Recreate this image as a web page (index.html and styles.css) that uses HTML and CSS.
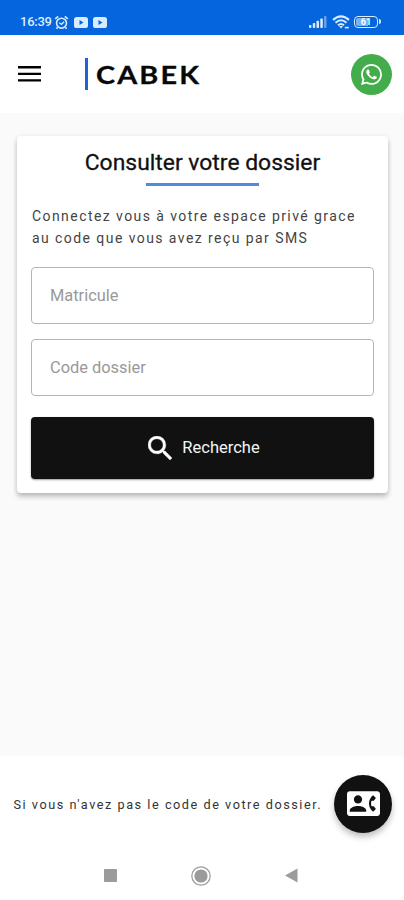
FILE: index.html
```html
<!DOCTYPE html>
<html lang="fr">
<head>
<meta charset="utf-8">
<meta name="viewport" content="width=device-width, initial-scale=1">
<title>CABEK</title>
<link rel="stylesheet" href="styles.css">
</head>
<body>
<div class="status">
  <span class="time">16:39</span>
  <svg class="alarm" viewBox="0 0 16 16" fill="none" stroke="currentColor"><circle cx="8" cy="8.7" r="5.3" stroke-width="1.7"/><path d="M1.3 4.2 4.5 1.5M14.7 4.2 11.5 1.5M3.7 13.2 2.6 14.6M12.3 13.2l1.1 1.4" stroke-width="1.8"/><path d="M5.6 8.2 8 10l2.7-2.8" stroke-width="1.5"/></svg>
  <svg class="video" viewBox="0 0 14 11"><rect width="14" height="11" rx="2.6" fill="currentColor"/><path d="M5.5 3v5l4-2.5z" fill="#0565dc"/></svg>
  <svg class="video" viewBox="0 0 14 11"><rect width="14" height="11" rx="2.6" fill="currentColor"/><path d="M5.5 3v5l4-2.5z" fill="#0565dc"/></svg>
  <span class="spacer"></span>
  <svg class="signal" viewBox="0 0 18 12" fill="currentColor"><rect y="9" width="2.4" height="3" rx=".8"/><rect x="3.8" y="7" width="2.4" height="5" rx=".8"/><rect x="7.5" y="4.8" width="2.5" height="7.2" rx=".8"/><rect x="11.3" y="2.4" width="2.5" height="9.6" rx=".8"/><rect x="15" width="2.5" height="12" rx=".8" opacity=".45"/></svg>
  <svg class="wifi" viewBox="0 0 18 14" fill="none" stroke="currentColor" stroke-width="2.1"><path d="M1 4.9Q9-2.2 17 4.9M3.5 7.7Q9 2.8 14.5 7.7M6 10.3Q9 7.7 12 10.3"/><path d="m7 11 2 2.4L11 11z" fill="currentColor" stroke="none"/><path d="M12.8 12.6h4" stroke-width="1.6"/></svg>
  <span class="battery"><span class="level">61</span></span>
</div>

<header class="header">
  <svg class="menu" viewBox="0 0 23 16"><path d="M0 0h23v2.4H0zM0 6.7h23v2.4H0zM0 13.2h23v2.4H0z"/></svg>
  <div class="brand"><span>CABEK</span></div>
  <a class="whatsapp" aria-label="WhatsApp">
    <svg viewBox="0 0 24 24" fill="#fff"><path d="M17.472 14.382c-.297-.149-1.758-.867-2.03-.967-.273-.099-.471-.148-.67.15-.197.297-.767.966-.94 1.164-.173.199-.347.223-.644.075-.297-.15-1.255-.463-2.39-1.475-.883-.788-1.48-1.761-1.653-2.059-.173-.297-.018-.458.13-.606.134-.133.298-.347.446-.52.149-.174.198-.298.298-.497.099-.198.05-.371-.025-.52-.075-.149-.669-1.612-.916-2.207-.242-.579-.487-.5-.669-.51-.173-.008-.371-.01-.57-.01-.198 0-.52.074-.792.372-.272.297-1.04 1.016-1.04 2.479 0 1.462 1.065 2.875 1.213 3.074.149.198 2.096 3.2 5.077 4.487.709.306 1.262.489 1.694.625.712.227 1.36.195 1.871.118.571-.085 1.758-.719 2.006-1.413.248-.694.248-1.289.173-1.413-.074-.124-.272-.198-.57-.347m-5.421 7.403h-.004a9.87 9.87 0 0 1-5.031-1.378l-.361-.214-3.741.982.998-3.648-.235-.374a9.86 9.86 0 0 1-1.51-5.26c.001-5.45 4.436-9.884 9.888-9.884a9.82 9.82 0 0 1 6.988 2.898 9.825 9.825 0 0 1 2.893 6.994c-.003 5.45-4.437 9.884-9.885 9.884m8.413-18.297A11.815 11.815 0 0 0 12.05 0C5.495 0 .16 5.335.157 11.892c0 2.096.547 4.142 1.588 5.945L.057 24l6.305-1.654a11.882 11.882 0 0 0 5.683 1.448h.005c6.554 0 11.89-5.335 11.893-11.893a11.821 11.821 0 0 0-3.48-8.413"/></svg>
  </a>
</header>

<main class="content">
  <section class="card">
    <h1>Consulter votre dossier</h1>
    <div class="rule"></div>
    <p class="intro">Connectez vous à votre espace privé grace<br>au code que vous avez reçu par SMS</p>
    <input class="field" type="text" placeholder="Matricule" aria-label="Matricule">
    <input class="field" type="text" placeholder="Code dossier" aria-label="Code dossier">
    <button class="search" type="button">
      <svg viewBox="3 3 17.5 17.5" fill="#fff" stroke="#fff" stroke-width=".3"><path d="M15.5 14h-.79l-.28-.27A6.471 6.471 0 0 0 16 9.5 6.5 6.5 0 1 0 9.5 16c1.61 0 3.09-.59 4.23-1.57l.27.28v.79l5 4.99L20.49 19l-4.99-5zm-6 0C7.01 14 5 11.99 5 9.5S7.01 5 9.5 5 14 7.01 14 9.5 11.99 14 9.5 14z"/></svg>
      <span>Recherche</span>
    </button>
  </section>
</main>

<footer class="footer">
  <p>Si vous n'avez pas le code de votre dossier.</p>
  <a class="contact" aria-label="Contact">
    <svg viewBox="0 3 24 18" fill="#fff"><path d="M22 3H2C.9 3 0 3.9 0 5v14c0 1.1.9 2 2 2h20c1.1 0 1.99-.9 1.99-2L24 5c0-1.1-.9-2-2-2zM8 6c1.66 0 3 1.34 3 3s-1.34 3-3 3-3-1.34-3-3 1.34-3 3-3zm6 12H2v-1c0-2 4-3.1 6-3.1s6 1.1 6 3.1v1zm3.85-4h1.64L21 16l-1.99 1.99c-1.31-.98-2.28-2.38-2.73-3.99-.18-.64-.28-1.31-.28-2s.1-1.36.28-2c.45-1.62 1.42-3.01 2.73-3.99L21 8l-1.51 2h-1.64c-.22.63-.35 1.3-.35 2s.13 1.37.35 2z"/></svg>
  </a>
</footer>

<nav class="navbar">
  <svg width="13" height="13" viewBox="0 0 13 13"><rect width="13" height="13" rx=".8" fill="#9b9b9b"/></svg>
  <svg width="20" height="20" viewBox="0 0 20 20"><circle cx="10" cy="10" r="9.2" fill="none" stroke="#9b9b9b" stroke-width="1.2"/><circle cx="10" cy="10" r="6.6" fill="#9b9b9b"/></svg>
  <svg width="13" height="15" viewBox="0 0 13 15"><path d="M0 7.5 12.5.6v13.8z" fill="#9b9b9b"/></svg>
</nav>
</body>
</html>
```
FILE: styles.css
```css
* {
  box-sizing: border-box;
}

body {
  margin: 0;
  height: 900px;
  display: flex;
  flex-direction: column;
  overflow: hidden;
  background: #fff;
  color: #111;
  font-family: Roboto, sans-serif;
}

svg {
  display: block;
  flex: none;
}

.status {
  height: 35px;
  padding: 9px 24px 0 20px;
  display: flex;
  align-items: center;
  background: #0565dc;
  color: #d9ecff;
}

.time {
  width: 34px;
  font-size: 13px;
  font-weight: 500;
  letter-spacing: -0.25px;
  line-height: 16px;
}

.alarm {
  width: 15px;
  height: 15px;
  margin-right: 5px;
}

.video {
  width: 14px;
  height: 11px;
  margin-right: 4.5px;
}

.spacer {
  flex: 1;
}

.signal {
  width: 18px;
  height: 12px;
  margin-right: 5px;
}

.wifi {
  width: 18px;
  height: 14px;
  margin-right: 4px;
}

.battery {
  position: relative;
  width: 24px;
  height: 12px;
  padding: 1px;
  border: 1.5px solid currentColor;
  border-radius: 4px;
  margin-right: 2px;
}

.battery::after {
  content: "";
  position: absolute;
  right: -4px;
  top: 2px;
  width: 2px;
  height: 5px;
  border-radius: 0 2px 2px 0;
  background: currentColor;
}

.level {
  display: block;
  height: 8px;
  border-radius: 2px;
  background: linear-gradient(90deg, #76b3f5 62%, transparent 62%);
  color: #fff;
  font-size: 9px;
  font-weight: 700;
  line-height: 8px;
  text-align: center;
}

.header {
  height: 78px;
  padding: 0 12px 0 18px;
  display: flex;
  align-items: center;
}

.menu {
  width: 23px;
  height: 16px;
}

.brand {
  height: 32px;
  margin-left: 44px;
  padding-left: 8px;
  display: flex;
  align-items: center;
  border-left: 3px solid #2163cf;
}

.brand span {
  padding-top: 1px;
  font-family: Lato, sans-serif;
  font-size: 24px;
  font-weight: 700;
  letter-spacing: 1.8px;
  line-height: 32px;
  color: #080808;
  transform: scaleX(1.2);
  transform-origin: left;
  -webkit-text-stroke: 0.3px currentColor;
}

.whatsapp {
  width: 41px;
  height: 41px;
  margin-left: auto;
  display: grid;
  place-items: center;
  border-radius: 50%;
  background: #44ad4b;
}

.whatsapp svg {
  width: 21px;
  height: 21px;
}

.content {
  height: 643px;
  padding: 23px 16px 0 17px;
  background: #fafafa;
}

.card {
  height: 357px;
  padding: 12px 14px 14px;
  display: flex;
  flex-direction: column;
  border-radius: 4px;
  background: #fff;
  box-shadow: 0 4px 5px rgba(0, 0, 0, 0.2), 0 1px 5px rgba(0, 0, 0, 0.1);
}

h1 {
  margin: 0;
  font-size: 22.9px;
  font-weight: 400;
  line-height: 30px;
  text-align: center;
  white-space: nowrap;
  -webkit-text-stroke: 0.3px currentColor;
}

.rule {
  width: 113px;
  height: 3px;
  margin: 5px auto 19px;
  background: #4f8bde;
}

.intro {
  margin: 0 0 18px 1px;
  font-size: 14px;
  letter-spacing: 1.43px;
  line-height: 22px;
  color: #444;
  white-space: nowrap;
}

.field {
  width: 100%;
  height: 57px;
  margin: 0 0 15px;
  padding: 0 18px;
  border: 1px solid #b5b5b5;
  border-radius: 4px;
  background: #fff;
  font: 16.4px Roboto, sans-serif;
}

.field::placeholder {
  color: #999;
  opacity: 1;
}

.search {
  height: 62px;
  margin-top: 6px;
  padding: 0 0 1px 3px;
  display: flex;
  align-items: center;
  justify-content: center;
  gap: 10px;
  border: 0;
  border-radius: 4px;
  background: #111;
  box-shadow: 0 1px 2px rgba(0, 0, 0, 0.4);
  color: #f5f5f5;
  font: 16.5px Roboto, sans-serif;
}

.search svg {
  width: 24px;
  height: 24px;
}

.footer {
  height: 95px;
  padding: 0 12px 0 13.5px;
  display: flex;
  align-items: center;
  justify-content: space-between;
}

.footer p {
  margin: 3px 0 0;
  font-size: 12.7px;
  letter-spacing: 1.53px;
  line-height: 20px;
  color: #333;
  white-space: nowrap;
}

.contact {
  width: 58px;
  height: 58px;
  flex: none;
  display: grid;
  place-items: center;
  border-radius: 50%;
  background: #111;
  box-shadow: 0 4px 6px rgba(0, 0, 0, 0.25);
}

.contact svg {
  width: 33px;
  height: 25px;
}

.navbar {
  height: 49px;
  padding: 0 106px 0 104px;
  display: flex;
  align-items: center;
  justify-content: space-between;
}
```
